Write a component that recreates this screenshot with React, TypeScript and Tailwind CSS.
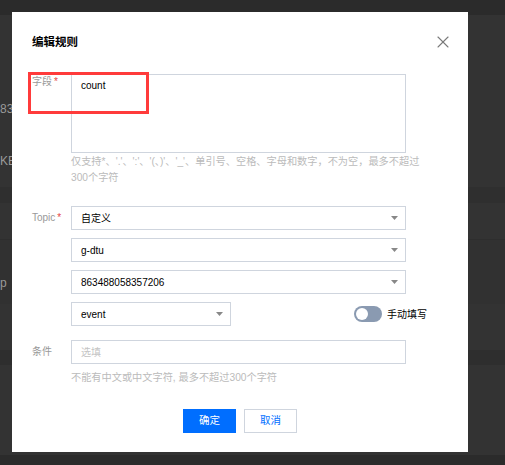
import { X } from "lucide-react";

const font = { fontFamily: '"Liberation Sans", "Noto Sans CJK SC", sans-serif' };

function Caret() {
  return (
    <svg width="7" height="4" viewBox="0 0 7 4" className="shrink-0">
      <path d="M0 0h7L3.5 4z" fill="#888" />
    </svg>
  );
}

function Select({ value, className }: { value: string; className: string }) {
  return (
    <div className={`flex h-[24px] items-center justify-between border border-[#cfd5de] pl-[9px] pr-[7px] text-[10px] text-[#000] ${className}`}>
      <span>{value}</span>
      <Caret />
    </div>
  );
}

function Label({ text, required }: { text: string; required?: boolean }) {
  return (
    <div className="w-[39px] shrink-0 text-[10px] leading-[16px] text-[#999]">
      {text}
      {required && <span className="ml-[2px] text-[#e54545]">*</span>}
    </div>
  );
}

function Background() {
  return (
    <div className="flex h-[465px] w-[505px] flex-col bg-[#333] text-[12px] text-[#9a9a9a]">
      <div className="h-[15px] shrink-0 bg-[#2b2b2b]" />
      <div className="flex h-[172px] shrink-0 flex-col">
        <div className="mt-[86px] h-[16px] leading-[16px]">8335</div>
        <div className="mt-[36px] h-[16px] leading-[16px]">KB</div>
      </div>
      <div className="h-[16px] shrink-0 bg-[#2f2f2f]" />
      <div className="h-[37px] shrink-0 border-b border-[#2e2e2e]" />
      <div className="flex h-[64px] shrink-0 items-center bg-[#313131]">
        <span className="mt-[22px]">p</span>
      </div>
      <div className="h-[46px] shrink-0" />
      <div className="h-[15px] shrink-0 bg-[#2e2e2e]" />
      <div className="h-[90px] shrink-0" />
      <div className="flex-1 bg-[#2b2b2b]" />
    </div>
  );
}

export default function App() {
  return (
    <div className="relative h-[465px] w-[505px] overflow-hidden" style={font}>
      <Background />

      <div className="absolute left-[12px] top-[12px] flex h-[440px] w-[456px] flex-col bg-white px-[20px] pt-[20px]">
        <div className="text-[11.5px] font-bold leading-[20px] text-[#000]">编辑规则</div>
        <button className="absolute right-[15px] top-[20px] text-[#7a7a7a]">
          <X size={20} strokeWidth={1.3} />
        </button>

        <div className="mt-[22px] flex">
          <Label text="字段" required />
          <div className="flex flex-col">
            <div className="h-[79px] w-[335px] border border-[#cfd5de] px-[9px] pt-[3px] text-[10px] leading-[16px] text-[#000]">
              count
            </div>
            <div className="mt-[1px] whitespace-nowrap text-[10.2px] leading-[16px] text-[#bbb]">
              仅支持*、'.'、':'、'(、)'、'_'、单引号、空格、字母和数字，不为空，最多不超过
              <br />
              300个字符
            </div>
          </div>
        </div>

        <div className="mt-[20px] flex">
          <div className="pt-[4px]">
            <Label text="Topic" required />
          </div>
          <div className="flex flex-col gap-[8px]">
            <Select value="自定义" className="w-[335px]" />
            <Select value="g-dtu" className="w-[335px]" />
            <Select value="863488058357206" className="w-[335px]" />
            <div className="flex items-center">
              <Select value="event" className="w-[160px]" />
              <div className="ml-[123px] flex h-[16px] w-[28px] items-center rounded-full bg-[#8a9ab1] pl-[2px]">
                <div className="h-[12px] w-[12px] rounded-full bg-white" />
              </div>
              <span className="ml-[5px] text-[10px] text-[#000]">手动填写</span>
            </div>
          </div>
        </div>

        <div className="mt-[14px] flex">
          <div className="pt-[4px]">
            <Label text="条件" />
          </div>
          <div className="flex flex-col">
            <div className="flex h-[24px] w-[335px] items-center border border-[#cfd5de] px-[9px] text-[10px] text-[#c4c4c4]">
              选填
            </div>
            <div className="mt-[6px] text-[10.2px] leading-[16px] text-[#bbb]">
              不能有中文或中文字符, 最多不超过300个字符
            </div>
          </div>
        </div>

        <div className="mt-[23px] flex justify-center gap-[8px]">
          <button className="h-[24px] w-[53px] bg-[#006eff] text-[10.5px] text-white">确定</button>
          <button className="h-[24px] w-[53px] border border-[#cfd5de] bg-white text-[10.5px] text-[#006eff]">取消</button>
        </div>

        <div className="absolute left-[16px] top-[60px] h-[42px] w-[121px] border-[3px] border-[#ff3b3b]" />
      </div>
    </div>
  );
}
